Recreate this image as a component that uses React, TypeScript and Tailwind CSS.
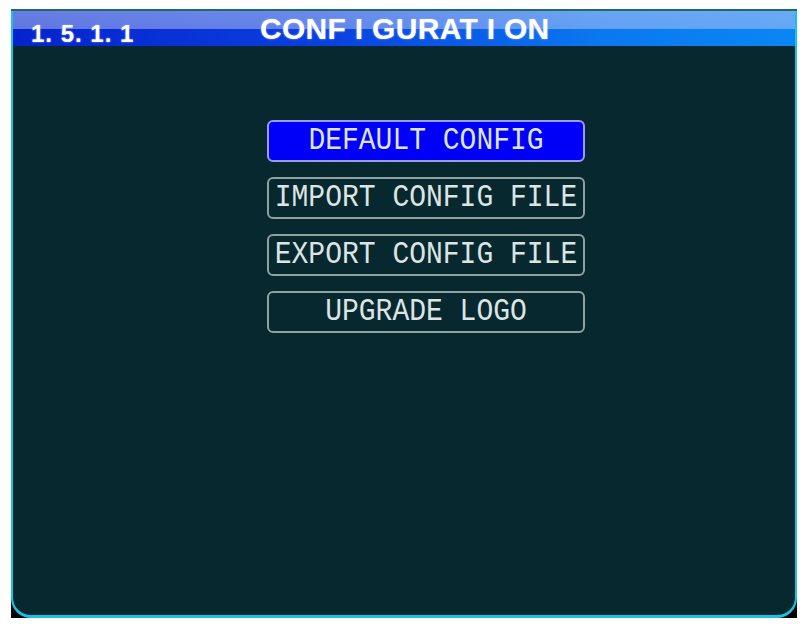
const items = [
  { label: "DEFAULT CONFIG", active: true },
  { label: "IMPORT CONFIG FILE", active: false },
  { label: "EXPORT CONFIG FILE", active: false },
  { label: "UPGRADE LOGO", active: false },
];

export default function App() {
  return (
    <div className="min-h-screen bg-white pt-[9px] pl-[11px]">
      <div className="w-[786px] h-[609px] bg-black flex flex-col">
        <div className="h-[2px] bg-[#1d6a68]" />
        <div className="flex-1 flex flex-col border-x-2 border-b-[3px] border-[#19c3e6] rounded-b-[20px] bg-[#07282f] overflow-hidden">
          <div className="h-[35px] flex items-start bg-[image:linear-gradient(to_bottom,rgba(185,200,245,0.55)_0%,rgba(185,200,245,0.5)_52%,transparent_52%),linear-gradient(to_right,#0622cc,#0a40e0_40%,#0a78f0_75%,#0a86f4)] font-['Liberation_Sans',Arial,sans-serif] font-bold text-white [text-shadow:0_0_2px_#9ab4ff]">
            <div className="w-[247px] pl-[18px] mt-[11px] text-[24px] leading-none tracking-[1px]">1. 5. 1. 1</div>
            <div className="mt-[3px] text-[30px] leading-none tracking-[0.3px]">CONF I GURAT I ON</div>
          </div>
          <div className="flex flex-col gap-[15px] pt-[74px] pl-[254px]">
            {items.map((it) => (
              <div
                key={it.label}
                className={
                  it.active
                    ? "w-[318px] h-[42px] flex items-center justify-center rounded-[6px] border-2 border-[#9c9cf4] bg-[#0000fa]"
                    : "w-[318px] h-[42px] flex items-center justify-center rounded-[6px] border-2 border-[#8fa2a2] bg-[#07282f]"
                }
              >
                <span className="inline-block scale-y-110 font-['Liberation_Mono','Courier_New',monospace] text-[28px] leading-none text-[#dde4e4] whitespace-pre">
                  {it.label}
                </span>
              </div>
            ))}
          </div>
        </div>
      </div>
    </div>
  );
}
